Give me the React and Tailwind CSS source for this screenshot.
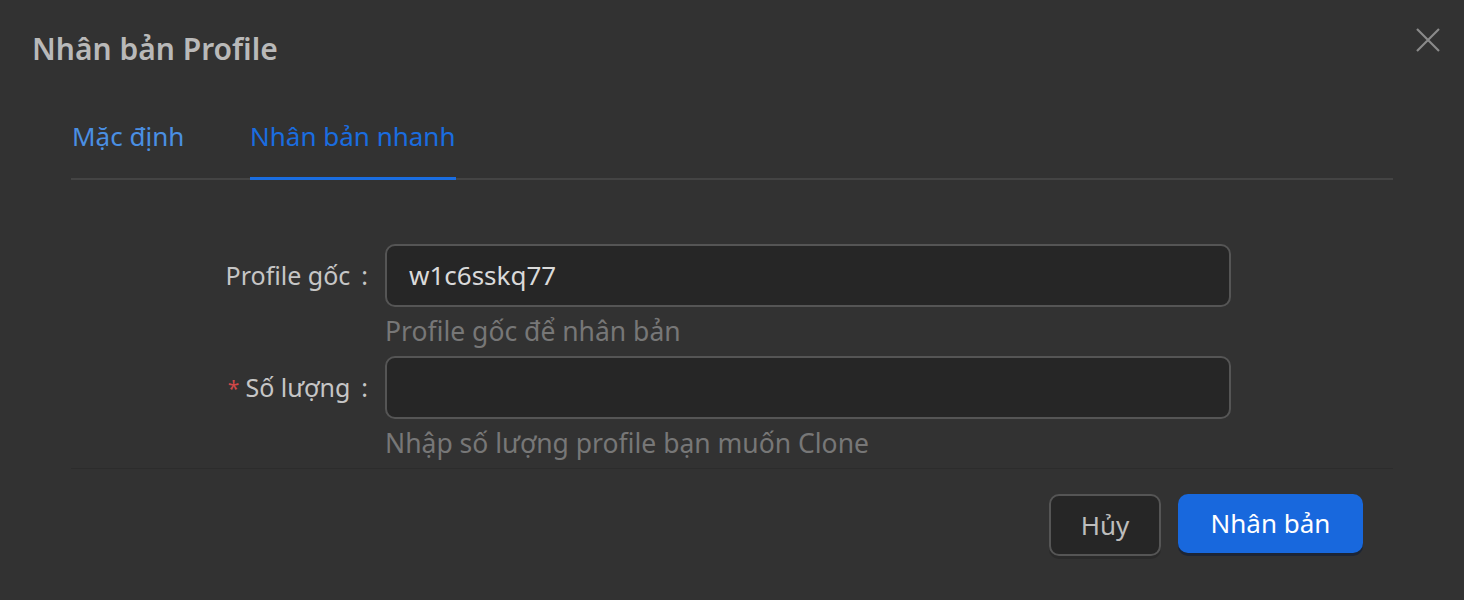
import React from "react";

export default function App() {
  return (
    <div
      className="relative w-full h-[600px] bg-[#323232] overflow-hidden"
      style={{ fontFamily: '"Noto Sans", "Open Sans", sans-serif' }}
    >
      {/* Header */}
      <div className="pl-[32px] pt-[29px] h-[100px]">
        <h1 className="text-[30px] leading-[40px] font-semibold text-[#b9b9b9]">Nhân bản Profile</h1>
      </div>
      <button className="absolute top-[26px] right-[22px] w-[28px] h-[28px] flex items-center justify-center">
        <svg width="26" height="26" viewBox="0 0 26 26" fill="none" stroke="#8a8a8a" strokeWidth="2.2">
          <path d="M2 2 L24 24 M24 2 L2 24" />
        </svg>
      </button>

      {/* Tabs */}
      <div className="mx-[71px] flex border-b-2 border-[#444444] h-[80px] items-stretch">
        <div className="relative flex items-center pl-[1px] w-[179px] pb-[6px]">
          <span className="text-[26px] text-[#4a8fe3]">Mặc định</span>
        </div>
        <div className="relative flex items-center pb-[6px]">
          <span className="text-[26px] text-[#1a6de0]">Nhân bản nhanh</span>
          <div className="absolute left-0 right-0 bottom-[-2px] h-[3px] bg-[#1a6de0]" />
        </div>
      </div>

      {/* Form */}
      <div className="mt-[64px] flex flex-col">
        <div className="flex">
          <div className="w-[385px] pr-[17px] h-[63px] flex items-center justify-end">
            <span className="text-[25px] text-[#c6c6c6]">Profile gốc</span>
            <span className="text-[25px] text-[#c6c6c6] ml-[11px]">:</span>
          </div>
          <div className="flex flex-col">
            <div className="w-[846px] h-[63px] rounded-[10px] border-2 border-[#555555] bg-[#262626] flex items-center px-[22px]">
              <span className="text-[26px] text-[#dadada]">w1c6sskq77</span>
            </div>
            <div className="h-[49px] pt-[5px] text-[26.5px] leading-[38px] text-[#777777]">Profile gốc để nhân bản</div>
          </div>
        </div>
        <div className="flex">
          <div className="w-[385px] pr-[17px] h-[63px] flex items-center justify-end">
            <span className="text-[21px] text-[#d04848] mr-[6px] mt-[2px]">*</span>
            <span className="text-[25px] text-[#c6c6c6]">Số lượng</span>
            <span className="text-[25px] text-[#c6c6c6] ml-[11px]">:</span>
          </div>
          <div className="flex flex-col">
            <div className="w-[846px] h-[63px] rounded-[10px] border-2 border-[#555555] bg-[#262626]" />
            <div className="h-[49px] pt-[5px] text-[26.5px] leading-[38px] text-[#777777]">Nhập số lượng profile bạn muốn Clone</div>
          </div>
        </div>
      </div>

      {/* Footer */}
      <div className="mx-[71px] border-t border-[#2c2c2c] flex justify-end gap-[17px] pt-[25px] pr-[30px]">
        <button className="w-[112px] h-[62px] rounded-[10px] border-2 border-[#555555] bg-[#262626] text-[26px] text-[#bdbdbd] shadow-[0_3px_0_#2a2a2a]">
          Hủy
        </button>
        <button className="w-[185px] h-[59px] rounded-[10px] bg-[#1868dd] text-[26px] text-white shadow-[0_3px_0_#1c2535]">
          Nhân bản
        </button>
      </div>
    </div>
  );
}
